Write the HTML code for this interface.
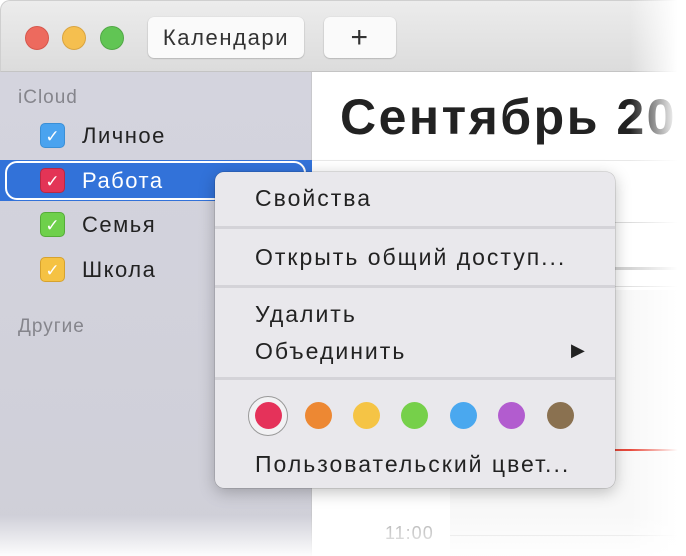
<!DOCTYPE html>
<html><head><meta charset="utf-8"><style>
*{margin:0;padding:0;box-sizing:border-box}
body{width:686px;height:556px;overflow:hidden;background:#fff;position:relative;font-family:"Liberation Sans","DejaVu Sans",sans-serif}
.abs{position:absolute;white-space:nowrap}
.title{left:0;top:0;width:686px;height:72px;background:linear-gradient(#ececec,#dcdcdc);border-top-left-radius:10px;border-bottom:1px solid #c4c4c4;border-top:1px solid #cfcfcf;border-left:1px solid #cfcfcf}
.tl{width:24px;height:24px;border-radius:50%;top:26px}
.btn{top:17px;height:41px;background:#fafafa;border-radius:6px;box-shadow:0 0.5px 1.5px rgba(0,0,0,.3);font-size:22px;color:#333;text-align:center;line-height:41px;letter-spacing:1.6px}
.side{left:0;top:72px;width:312px;height:484px;background:linear-gradient(#d4d4de,#cfcfd8);border-right:1px solid #c8c8cc}
.row{left:0;width:312px;height:40px;font-size:22px;color:#222;letter-spacing:1.5px}
.cb{position:absolute;left:40px;top:7px;width:25px;height:25px;border-radius:5px;color:#fff;font-size:17px;line-height:25px;text-align:center;letter-spacing:0}
.row span.t{position:absolute;left:82px;top:7px}
.menu{left:215px;top:172px;width:400px;height:316px;background:#e9e8ec;border-radius:9px;box-shadow:0 4px 16px rgba(0,0,0,.25),0 0 0 .5px rgba(0,0,0,.2)}
.mi{position:absolute;left:40px;font-size:23px;color:#222;letter-spacing:2px;white-space:nowrap}
.sep{position:absolute;left:0;width:400px;height:3px;background:#d4d3d8}
.dot{position:absolute;top:230px;width:27px;height:27px;border-radius:50%}
</style></head><body>
<div class="abs" style="left:312px;top:72px;width:374px;height:484px;background:#fff"></div>
<div class="abs" style="left:340px;top:88px;font-size:50px;font-weight:bold;color:#222;letter-spacing:2.5px">Сентябрь 20</div>
<div class="abs" style="left:312px;top:160px;width:374px;height:1px;background:#e8e8e8"></div>
<div class="abs" style="left:312px;top:222px;width:374px;height:1px;background:#dcdcdc"></div>
<div class="abs" style="left:312px;top:267px;width:374px;height:3px;background:#d4d4d4"></div>
<div class="abs" style="left:312px;top:286px;width:374px;height:1px;background:#e0e0e0"></div>
<div class="abs" style="left:450px;top:290px;width:236px;height:266px;background:#f8f8f8"></div>
<div class="abs" style="left:612px;top:449px;width:74px;height:2px;background:#e84a3c"></div>
<div class="abs" style="left:450px;top:535px;width:236px;height:1px;background:#ddd"></div>
<div class="abs" style="left:385px;top:523px;font-size:18px;color:#aaa;letter-spacing:1px">11:00</div>

<div class="abs title"></div>
<div class="abs tl" style="left:25px;background:#ed6a5e;border:1px solid #d6574c"></div>
<div class="abs tl" style="left:62px;background:#f5bf4f;border:1px solid #d9a440"></div>
<div class="abs tl" style="left:100px;background:#61c554;border:1px solid #51a846"></div>
<div class="abs btn" style="left:148px;width:156px">Календари</div>
<div class="abs btn" style="left:324px;width:72px;font-size:30px;font-weight:300">+</div>

<div class="abs side"></div>
<div class="abs" style="left:18px;top:87px;font-size:19px;color:#85858c;letter-spacing:1px">iCloud</div>
<div class="abs row" style="top:116px"><div class="cb" style="background:#4aa3ef;border:1px solid #3a8fd6">✓</div><span class="t">Личное</span></div>
<div class="abs" style="left:0;top:160px;width:312px;height:41px;background:#3272d9"></div>
<div class="abs" style="left:5px;top:161px;width:301px;height:39px;border:2.5px solid #fff;border-radius:12px"></div>
<div class="abs" style="left:282px;top:166px;font-size:20px;color:#fff">›</div>
<div class="abs row" style="top:161px;color:#fff"><div class="cb" style="background:#e33456;border:1px solid #b82844">✓</div><span class="t">Работа</span></div>
<div class="abs row" style="top:205px"><div class="cb" style="background:#6ed04b;border:1px solid #55ac38">✓</div><span class="t">Семья</span></div>
<div class="abs row" style="top:250px"><div class="cb" style="background:#f5c243;border:1px solid #d6a22e">✓</div><span class="t">Школа</span></div>
<div class="abs" style="left:18px;top:316px;font-size:19px;color:#85858c;letter-spacing:1px">Другие</div>

<div class="abs menu">
<div class="mi" style="top:13px">Свойства</div>
<div class="sep" style="top:54px"></div>
<div class="mi" style="top:72px">Открыть общий доступ...</div>
<div class="sep" style="top:113px"></div>
<div class="mi" style="top:129px">Удалить</div>
<div class="mi" style="top:166px">Объединить</div>
<div class="mi" style="left:356px;top:168px;font-size:18px">▶</div>
<div class="sep" style="top:205px"></div>
<div class="abs" style="left:33px;top:224px;width:40px;height:40px;border-radius:50%;border:1.5px solid #999;background:#f2f2f4"></div>
<div class="dot" style="left:40px;top:230px;background:#e5325a"></div>
<div class="dot" style="left:90px;background:#ed8833"></div>
<div class="dot" style="left:138px;background:#f5c445"></div>
<div class="dot" style="left:186px;background:#76d04a"></div>
<div class="dot" style="left:235px;background:#4aa8ef"></div>
<div class="dot" style="left:283px;background:#b25ccf"></div>
<div class="dot" style="left:332px;background:#8a7150"></div>
<div class="mi" style="top:279px">Пользовательский цвет...</div>
</div>

<div class="abs" style="left:630px;top:0;width:56px;height:556px;background:linear-gradient(90deg,rgba(255,255,255,0),#fff 85%)"></div>
<div class="abs" style="left:0;top:515px;width:686px;height:41px;background:linear-gradient(rgba(255,255,255,0),rgba(255,255,255,.95))"></div>
</body></html>
